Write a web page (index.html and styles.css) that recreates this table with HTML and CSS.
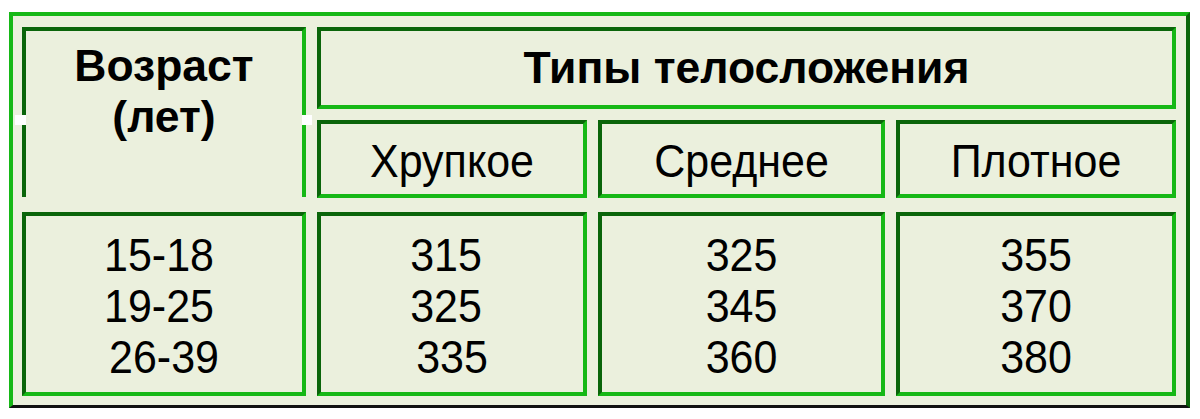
FILE: index.html
```html
<!DOCTYPE html>
<html lang="ru">
<head>
<meta charset="utf-8">
<title>Типы телосложения</title>
<link rel="stylesheet" href="styles.css">
</head>
<body>
<div class="frame">
  <div class="grid">
    <div class="cell age"><div class="bold">Возраст<br>(лет)</div></div>
    <div class="cell head bold">Типы телосложения</div>
    <div class="cell sub"><span class="tx">Хрупкое</span></div>
    <div class="cell sub"><span class="tx">Среднее</span></div>
    <div class="cell sub"><span class="tx">Плотное</span></div>
    <div class="cell data">
      <div class="ln l1">15-18</div>
      <div class="ln l1">19-25</div>
      <div class="ln">26-39</div>
    </div>
    <div class="cell data">
      <div class="ln l2">315</div>
      <div class="ln l2">325</div>
      <div class="ln">335</div>
    </div>
    <div class="cell data">
      <div class="ln">325</div>
      <div class="ln">345</div>
      <div class="ln">360</div>
    </div>
    <div class="cell data">
      <div class="ln">355</div>
      <div class="ln">370</div>
      <div class="ln">380</div>
    </div>
  </div>
</div>
</body>
</html>
```
FILE: styles.css
```css
html, body {
  margin: 0;
  padding: 0;
  background: #ffffff;
}
body {
  font-family: "Liberation Sans", Arial, sans-serif;
  color: #000;
}
.frame {
  box-sizing: border-box;
  margin: 12px 0 0 9px;
  width: 1181px;
  height: 396px;
  background: #ebf0dd;
  border-left: 4px solid #16b816;
  border-top: 4px solid #16b816;
  border-right: 4px solid #0a650a;
  border-bottom: 3px solid #111;
  padding: 11px 9px 9px 9px;
}
.grid {
  display: grid;
  grid-template-columns: 284px 270px 287px 280px;
  grid-template-rows: 82px 89px 198px;
  column-gap: 11px;
  row-gap: 0;
}
.cell {
  box-sizing: border-box;
  border-top: 4px solid #0a650a;
  border-left: 4px solid #0a650a;
  border-bottom: 4px solid #16b816;
  border-right: 4px solid #16b816;
  background: #ebf0dd;
  text-align: center;
  font-size: 43px;
  line-height: 51px;
}
.bold {
  font-weight: bold;
  font-size: 44.5px;
}
.age {
  grid-column: 1;
  grid-row: 1 / span 2;
  border-bottom: none;
  height: 170px;
  padding-top: 9px;
  position: relative;
}
.age::before,
.age::after {
  content: "";
  position: absolute;
  top: 84px;
  height: 10px;
  background: #ffffff;
}
.age::before { left: -11px; width: 11px; }
.age::after { right: -10px; width: 10px; }
.head {
  grid-column: 2 / span 3;
  grid-row: 1;
  display: flex;
  align-items: center;
  justify-content: center;
  padding-bottom: 1px;
}
.sub {
  grid-row: 2;
  margin-top: 11px;
  display: flex;
  align-items: center;
  justify-content: center;
  padding-top: 5px;
}
.tx {
  display: inline-block;
  transform: scaleY(1.06);
}
.data {
  grid-row: 3;
  margin-top: 14px;
  height: 184px;
  display: flex;
  flex-direction: column;
  justify-content: center;
  padding-top: 4px;
}
.ln {
  transform: scaleY(1.06);
}
.l1 { margin-right: 10px; }
.l2 { margin-right: 12px; }
```
